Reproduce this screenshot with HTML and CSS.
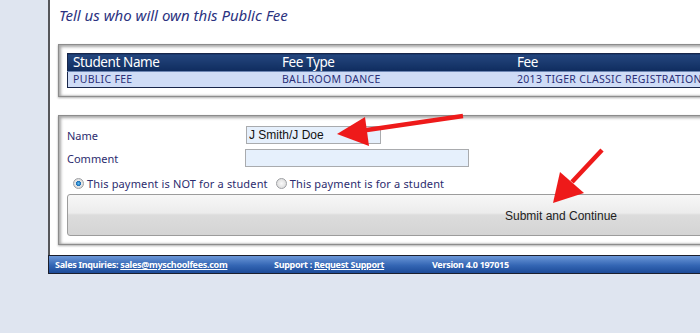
FILE: index.html
```html
<!DOCTYPE html>
<html lang="en">
<head>
  <meta charset="UTF-8" />
  <title>Public Fee Owner</title>
  <link rel="stylesheet" href="styles.css">
</head>
<body>
  <div class="page">
    <div class="panel">
      <h2 class="title">Tell us who will own this Public Fee</h2>

      <div class="frame">
        <table class="fees">
          <thead>
            <tr>
              <th class="col-name">Student Name</th>
              <th class="col-type">Fee Type</th>
              <th>Fee</th>
            </tr>
          </thead>
          <tbody>
            <tr>
              <td>PUBLIC FEE</td>
              <td>BALLROOM DANCE</td>
              <td>2013 TIGER CLASSIC REGISTRATION</td>
            </tr>
          </tbody>
        </table>
      </div>

      <div class="frame form-frame">
        <div class="form-grid">
          <label for="owner-name">Name</label>
          <input id="owner-name" class="name-input" type="text" value="J Smith/J Doe">
          <label for="owner-comment">Comment</label>
          <input id="owner-comment" class="comment-input" type="text">
        </div>

        <div class="radios">
          <label><input type="radio" name="target" checked> This payment is NOT for a student</label>
          <label><input type="radio" name="target"> This payment is for a student</label>
        </div>

        <button class="submit" type="button">Submit and Continue</button>
      </div>
    </div>

    <div class="footer">
      <span>Sales Inquiries: <a href="#">sales@myschoolfees.com</a></span>
      <span>Support : <a href="#">Request Support</a></span>
      <span>Version 4.0 197015</span>
    </div>
  </div>

  <svg class="arrows" width="700" height="333" viewBox="0 0 700 333">
    <line x1="463" y1="116" x2="360" y2="131" stroke="#ee1a1a" stroke-width="4.5" />
    <polygon points="337,134 365,117 369,146" fill="#ee1a1a" />
    <line x1="602" y1="150" x2="572" y2="182" stroke="#ee1a1a" stroke-width="4.5" />
    <polygon points="553,203 560,172 584,193" fill="#ee1a1a" />
  </svg>
</body>
</html>
```

FILE: styles.css
```css
body {
  margin: 0;
  background: #dfe5f0;
  font-family: 'Noto Sans', 'DejaVu Sans', sans-serif;
  overflow: hidden;
}
.page {
  margin-left: 48px;
  width: 1024px;
}
.panel {
  background: #fff;
  border-left: 2px solid #55565a;
  padding: 6px 8px 10px 8px;
}
.title {
  margin: 0 0 20px 1px;
  font-size: 15px;
  line-height: 18px;
  font-weight: normal;
  font-style: italic;
  color: #2b3280;
}
.frame {
  border: 1px solid #8c8c8c;
  box-shadow: inset 2px 2px 3px #a8a8a8, inset -1px -1px 2px #c8c8c8, 0 1px 2px #b0b0b0;
  padding: 8px;
}
.fees {
  width: 100%;
  border-collapse: collapse;
  border: 1px solid #18264a;
}
.fees th {
  background: linear-gradient(#24467e, #0f2c5e);
  color: #fff;
  font-weight: normal;
  font-size: 13.5px;
  letter-spacing: -0.4px;
  line-height: 17px;
  height: 17px;
  padding: 0 5px;
  text-align: left;
  border-bottom: 1px solid #6d86b4;
}
.fees td {
  background: #cfdcf6;
  color: #2b3078;
  font-size: 10.5px;
  letter-spacing: 0.3px;
  line-height: 15px;
  height: 15px;
  padding: 0 5px;
  white-space: nowrap;
}
.col-name {
  width: 199px;
}
.col-type {
  width: 225px;
}
.form-frame {
  margin-top: 18px;
  padding-top: 10px;
}
.form-grid {
  display: grid;
  grid-template-columns: 178px auto;
  row-gap: 5px;
  align-items: center;
}
.form-grid label {
  font-size: 11px;
  color: #2c2c6e;
}
.form-grid input {
  box-sizing: border-box;
  height: 18px;
  background: #e6f0fc;
  border: 1px solid #a9abae;
  font-family: 'Liberation Sans', Arial, sans-serif;
  font-size: 12px;
  color: #111;
  padding: 0 2px;
}
.name-input {
  width: 135px;
  margin-left: 1px;
}
.comment-input {
  width: 224px;
}
.radios {
  display: flex;
  gap: 8px;
  margin: 8px 0 3px 6px;
  height: 16px;
  align-items: center;
}
.radios label {
  display: flex;
  align-items: center;
  gap: 3px;
  font-size: 11px;
  letter-spacing: 0.15px;
  color: #2c2c6e;
}
.radios input {
  appearance: none;
  width: 11px;
  height: 11px;
  margin: 0;
  border-radius: 50%;
  border: 1px solid #9ea0a4;
  background: radial-gradient(#fafafa, #d4d4d4);
}
.radios input:checked {
  background: radial-gradient(#5fc0f0 0, #1d6fb8 35%, #e8e8e8 45%, #cfcfcf 100%);
}
.submit {
  display: block;
  width: 100%;
  height: 42px;
  border: 1px solid #9c9c9c;
  border-radius: 3px;
  background: linear-gradient(#f7f7f7 0, #ececec 45%, #dcdcdc 50%, #d4d4d4 100%);
  font-family: 'Liberation Sans', Arial, sans-serif;
  font-size: 12px;
  color: #222;
  padding-top: 2px;
}
.footer {
  display: grid;
  grid-template-columns: 219px 158px auto;
  height: 17px;
  align-items: center;
  padding-left: 6px;
  border: 1px solid #1b1e2c;
  background: linear-gradient(#6b97d8, #3466b4 55%, #1c4a98);
  color: #fff;
  font-weight: bold;
  font-size: 9px;
  letter-spacing: -0.3px;
}
.footer a {
  color: #fff;
}
.arrows {
  position: absolute;
  left: 0;
  top: 0;
  pointer-events: none;
}
```
